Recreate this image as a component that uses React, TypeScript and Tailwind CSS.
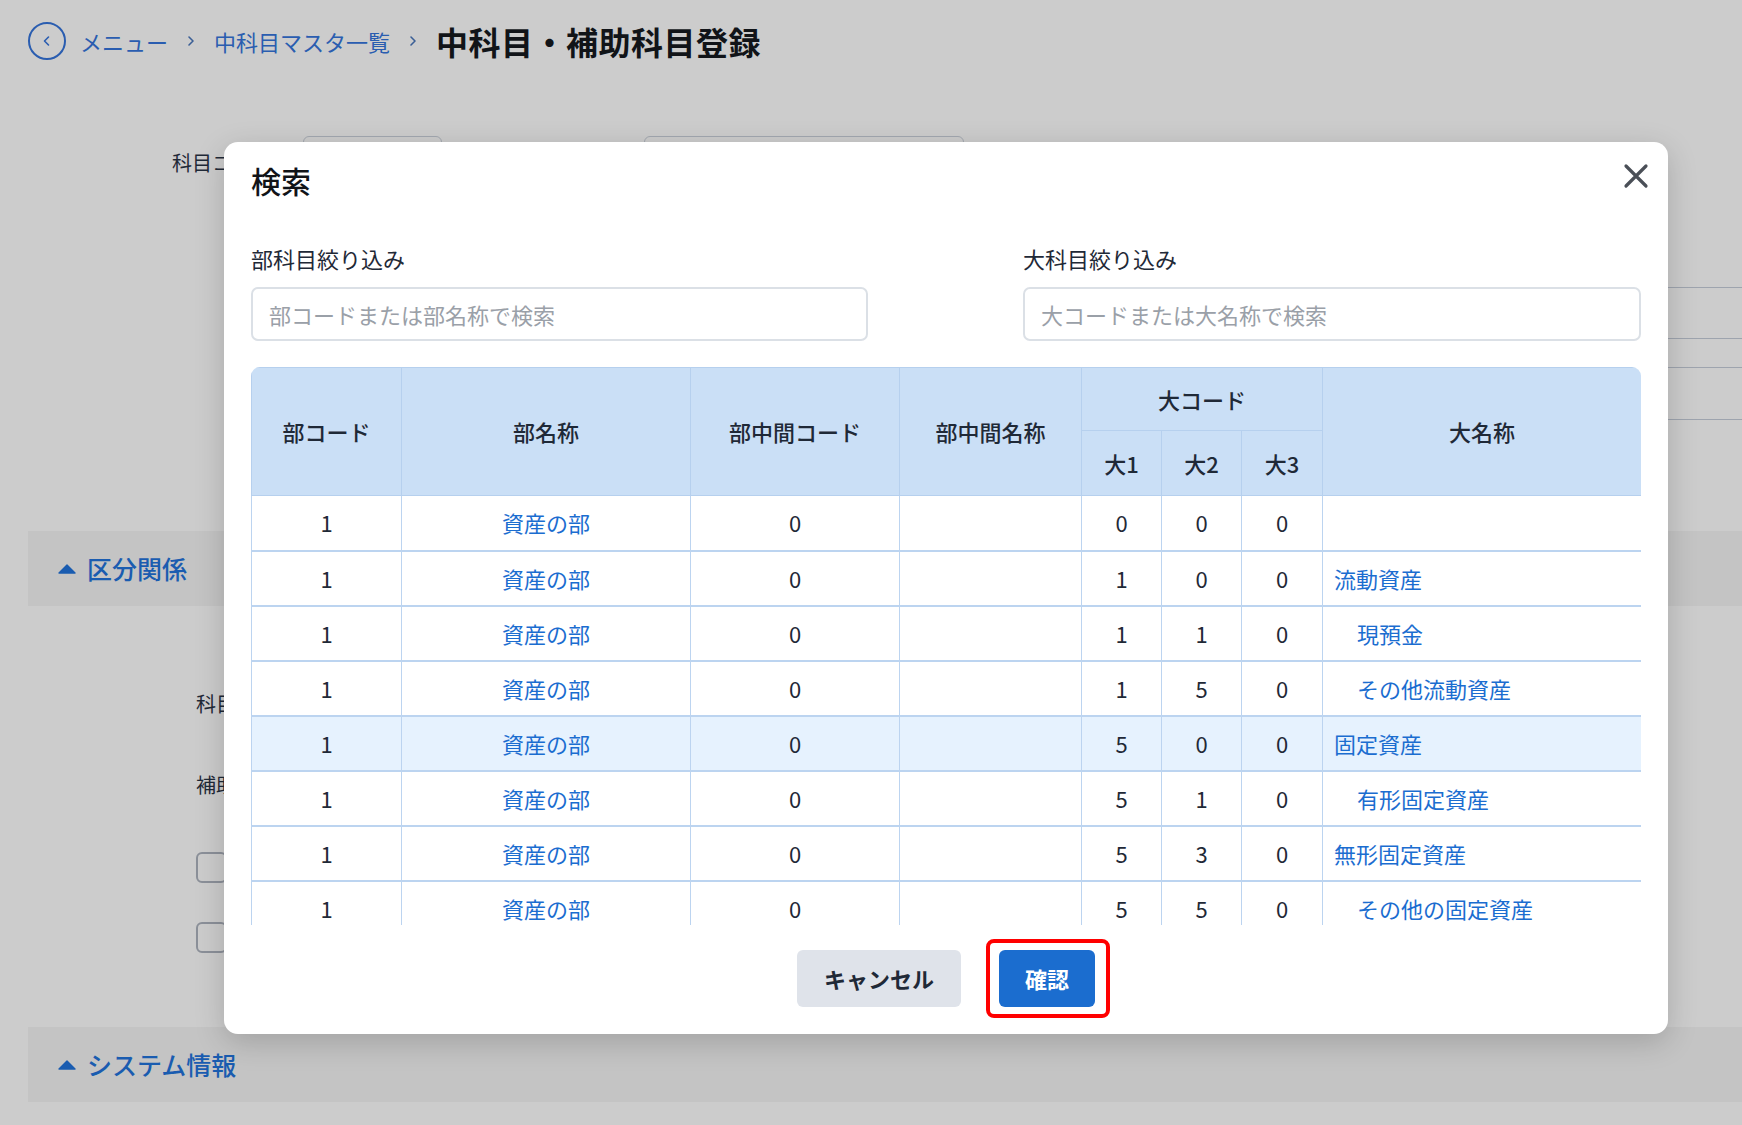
import React from "react";

type Row = {
  buCode: string;
  buName: string;
  midCode: string;
  midName: string;
  d1: string;
  d2: string;
  d3: string;
  name: string;
  indent?: boolean;
  active?: boolean;
};

const rows: Row[] = [
  { buCode: "1", buName: "資産の部", midCode: "0", midName: "", d1: "0", d2: "0", d3: "0", name: "" },
  { buCode: "1", buName: "資産の部", midCode: "0", midName: "", d1: "1", d2: "0", d3: "0", name: "流動資産" },
  { buCode: "1", buName: "資産の部", midCode: "0", midName: "", d1: "1", d2: "1", d3: "0", name: "現預金", indent: true },
  { buCode: "1", buName: "資産の部", midCode: "0", midName: "", d1: "1", d2: "5", d3: "0", name: "その他流動資産", indent: true },
  { buCode: "1", buName: "資産の部", midCode: "0", midName: "", d1: "5", d2: "0", d3: "0", name: "固定資産", active: true },
  { buCode: "1", buName: "資産の部", midCode: "0", midName: "", d1: "5", d2: "1", d3: "0", name: "有形固定資産", indent: true },
  { buCode: "1", buName: "資産の部", midCode: "0", midName: "", d1: "5", d2: "3", d3: "0", name: "無形固定資産" },
  { buCode: "1", buName: "資産の部", midCode: "0", midName: "", d1: "5", d2: "5", d3: "0", name: "その他の固定資産", indent: true },
];

function ChevronRight() {
  return (
    <svg width="10" height="14" viewBox="0 0 10 14" fill="none" className="shrink-0">
      <path d="M3 3l4 4-4 4" stroke="#3b5f96" strokeWidth="1.6" strokeLinecap="round" strokeLinejoin="round" />
    </svg>
  );
}

function TriangleUp() {
  return (
    <svg width="18" height="10" viewBox="0 0 18 10" className="shrink-0">
      <path d="M9 1 L17 9 H1 Z" fill="#1a5cb0" stroke="#1a5cb0" strokeWidth="1.4" strokeLinejoin="round" />
    </svg>
  );
}

function SectionBar({ title }: { title: string }) {
  return (
    <div className="h-[75px] bg-[#c4c4c4] flex items-center gap-[11px] pl-[30px]">
      <TriangleUp />
      <span className="text-[25px] font-medium text-[#1a5cb0]">{title}</span>
    </div>
  );
}

function BgPage() {
  return (
    <div className="pl-[28px]">
      {/* breadcrumb */}
      <header className="pt-[22px] flex items-center h-[60px]">
        <div className="w-[38px] h-[38px] rounded-full border-2 border-[#2a5db0] flex items-center justify-center">
          <svg width="12" height="14" viewBox="0 0 12 14" fill="none">
            <path d="M7.5 3L3.5 7l4 4" stroke="#2a5db0" strokeWidth="1.6" strokeLinecap="round" strokeLinejoin="round" />
          </svg>
        </div>
        <div className="ml-[14px] flex items-center gap-[18px]">
          <span className="text-[22px] text-[#2a5db0]">メニュー</span>
          <ChevronRight />
          <span className="text-[22px] text-[#2a5db0]">中科目マスタ一覧</span>
          <ChevronRight />
          <span className="text-[32px] font-bold text-[#111418] tracking-[0.5px]">中科目・補助科目登録</span>
        </div>
      </header>

      {/* form behind modal */}
      <section className="mt-[76px] pl-[144px]">
        <div className="flex items-center h-[54px]">
          <span className="w-[131px] text-[20px] text-[#1f2937]">科目コ</span>
          <div className="w-[139px] h-[54px] border border-[#a3a8b0] rounded-[6px]" />
          <span className="w-[202px]" />
          <div className="w-[320px] h-[54px] border border-[#a3a8b0] rounded-[6px]" />
        </div>
        <div className="mt-[97px] flex justify-end">
          <div className="w-[760px] h-[52px] border-y border-l border-[#9ea4ae] rounded-l-[6px]" />
        </div>
        <div className="mt-[28px] flex justify-end">
          <div className="w-[760px] h-[53px] border-y border-l border-[#9ea4ae] rounded-l-[6px]" />
        </div>
      </section>

      <div className="mt-[111px]">
        <SectionBar title="区分関係" />
      </div>

      <div className="pl-[168px]">
        <div className="mt-[83px] h-[30px] text-[20px] leading-[30px] text-[#1f2937]">科目区分</div>
        <div className="mt-[51px] h-[30px] text-[20px] leading-[30px] text-[#1f2937]">補助区分</div>
        <div className="mt-[52px] w-[31px] h-[31px] rounded-[6px] border-2 border-[#8b9099]" />
        <div className="mt-[39px] w-[31px] h-[31px] rounded-[6px] border-2 border-[#8b9099]" />
      </div>

      <div className="mt-[74px]">
        <SectionBar title="システム情報" />
      </div>
    </div>
  );
}

function SearchModal() {
  const th = "bg-[#cadff6] border border-[#b6d0ee] text-[22px] font-medium text-[#1f2937] text-center align-middle";
  const td = "border-x border-b-2 border-[#bcd4f0] h-[55px] text-[22px] text-center align-middle p-0";

  return (
    <div className="absolute left-[224px] top-[142px] w-[1444px] h-[892px] bg-white rounded-[14px] shadow-[0_8px_30px_rgba(0,0,0,0.18)] px-[27px] pt-[20px] pb-[26px] flex flex-col">
      <button className="absolute right-[19px] top-[21px] w-[26px] h-[26px] flex items-center justify-center">
        <svg width="26" height="26" viewBox="0 0 26 26" fill="none">
          <path d="M3 3l20 20M23 3L3 23" stroke="#4a4f57" strokeWidth="3.2" strokeLinecap="round" />
        </svg>
      </button>

      <h2 className="text-[30px] leading-[36px] font-medium text-[#111418]">検索</h2>

      <div className="mt-[45px] flex justify-between">
        <div className="w-[617px]">
          <label className="block text-[22px] leading-[30px] text-[#1f2937]">部科目絞り込み</label>
          <div className="mt-[14px] h-[54px] border-2 border-[#dbe0e6] rounded-[7px] flex items-center px-[16px]">
            <span className="text-[22px] text-[#9aa0a8]">部コードまたは部名称で検索</span>
          </div>
        </div>
        <div className="w-[618px]">
          <label className="block text-[22px] leading-[30px] text-[#1f2937]">大科目絞り込み</label>
          <div className="mt-[14px] h-[54px] border-2 border-[#dbe0e6] rounded-[7px] flex items-center px-[16px]">
            <span className="text-[22px] text-[#9aa0a8]">大コードまたは大名称で検索</span>
          </div>
        </div>
      </div>

      <div className="mt-[26px] h-[558px] overflow-hidden rounded-t-[9px]">
        <table className="w-full table-fixed border-collapse">
          <colgroup>
            <col className="w-[150px]" />
            <col className="w-[289px]" />
            <col className="w-[209px]" />
            <col className="w-[182px]" />
            <col className="w-[80px]" />
            <col className="w-[80px]" />
            <col className="w-[81px]" />
            <col className="w-[319px]" />
          </colgroup>
          <thead>
            <tr className="h-[63px]">
              <th rowSpan={2} className={th}>部コード</th>
              <th rowSpan={2} className={th}>部名称</th>
              <th rowSpan={2} className={th}>部中間コード</th>
              <th rowSpan={2} className={th}>部中間名称</th>
              <th colSpan={3} className={th}>大コード</th>
              <th rowSpan={2} className={th}>大名称</th>
            </tr>
            <tr className="h-[65px]">
              <th className={th}>大1</th>
              <th className={th}>大2</th>
              <th className={th}>大3</th>
            </tr>
          </thead>
          <tbody>
            {rows.map((r, i) => (
              <tr key={i} className={r.active ? "bg-[#e6f2fe]" : "bg-white"}>
                <td className={`${td} text-[#1f2937]`}>{r.buCode}</td>
                <td className={`${td} text-[#1b6dd0]`}>{r.buName}</td>
                <td className={`${td} text-[#1f2937]`}>{r.midCode}</td>
                <td className={`${td} text-[#1f2937]`}>{r.midName}</td>
                <td className={`${td} text-[#1f2937]`}>{r.d1}</td>
                <td className={`${td} text-[#1f2937]`}>{r.d2}</td>
                <td className={`${td} text-[#1f2937]`}>{r.d3}</td>
                <td className={`${td} text-left text-[#1b6dd0] ${r.indent ? "pl-[34px]" : "pl-[11px]"}`}>{r.name}</td>
              </tr>
            ))}
          </tbody>
        </table>
      </div>

      <div className="mt-[25px] flex justify-center gap-[38px]">
        <button className="h-[57px] px-[27px] rounded-[6px] bg-[#dfe3ea] text-[22px] font-bold text-[#1f2937]">
          キャンセル
        </button>
        <div className="relative">
          <button className="h-[57px] px-[26px] rounded-[6px] bg-[#1b6dcf] text-[22px] font-bold text-white">
            確認
          </button>
          <div className="absolute -left-[13px] -right-[15px] -top-[11px] -bottom-[11px] border-4 border-[#ff0000] rounded-[8px] pointer-events-none" />
        </div>
      </div>
    </div>
  );
}

export default function App() {
  return (
    <div className="relative w-[1742px] h-[1125px] overflow-hidden bg-[#cccccc] font-['Noto_Sans_CJK_JP','Noto_Sans',sans-serif]">
      <BgPage />
      <SearchModal />
    </div>
  );
}
